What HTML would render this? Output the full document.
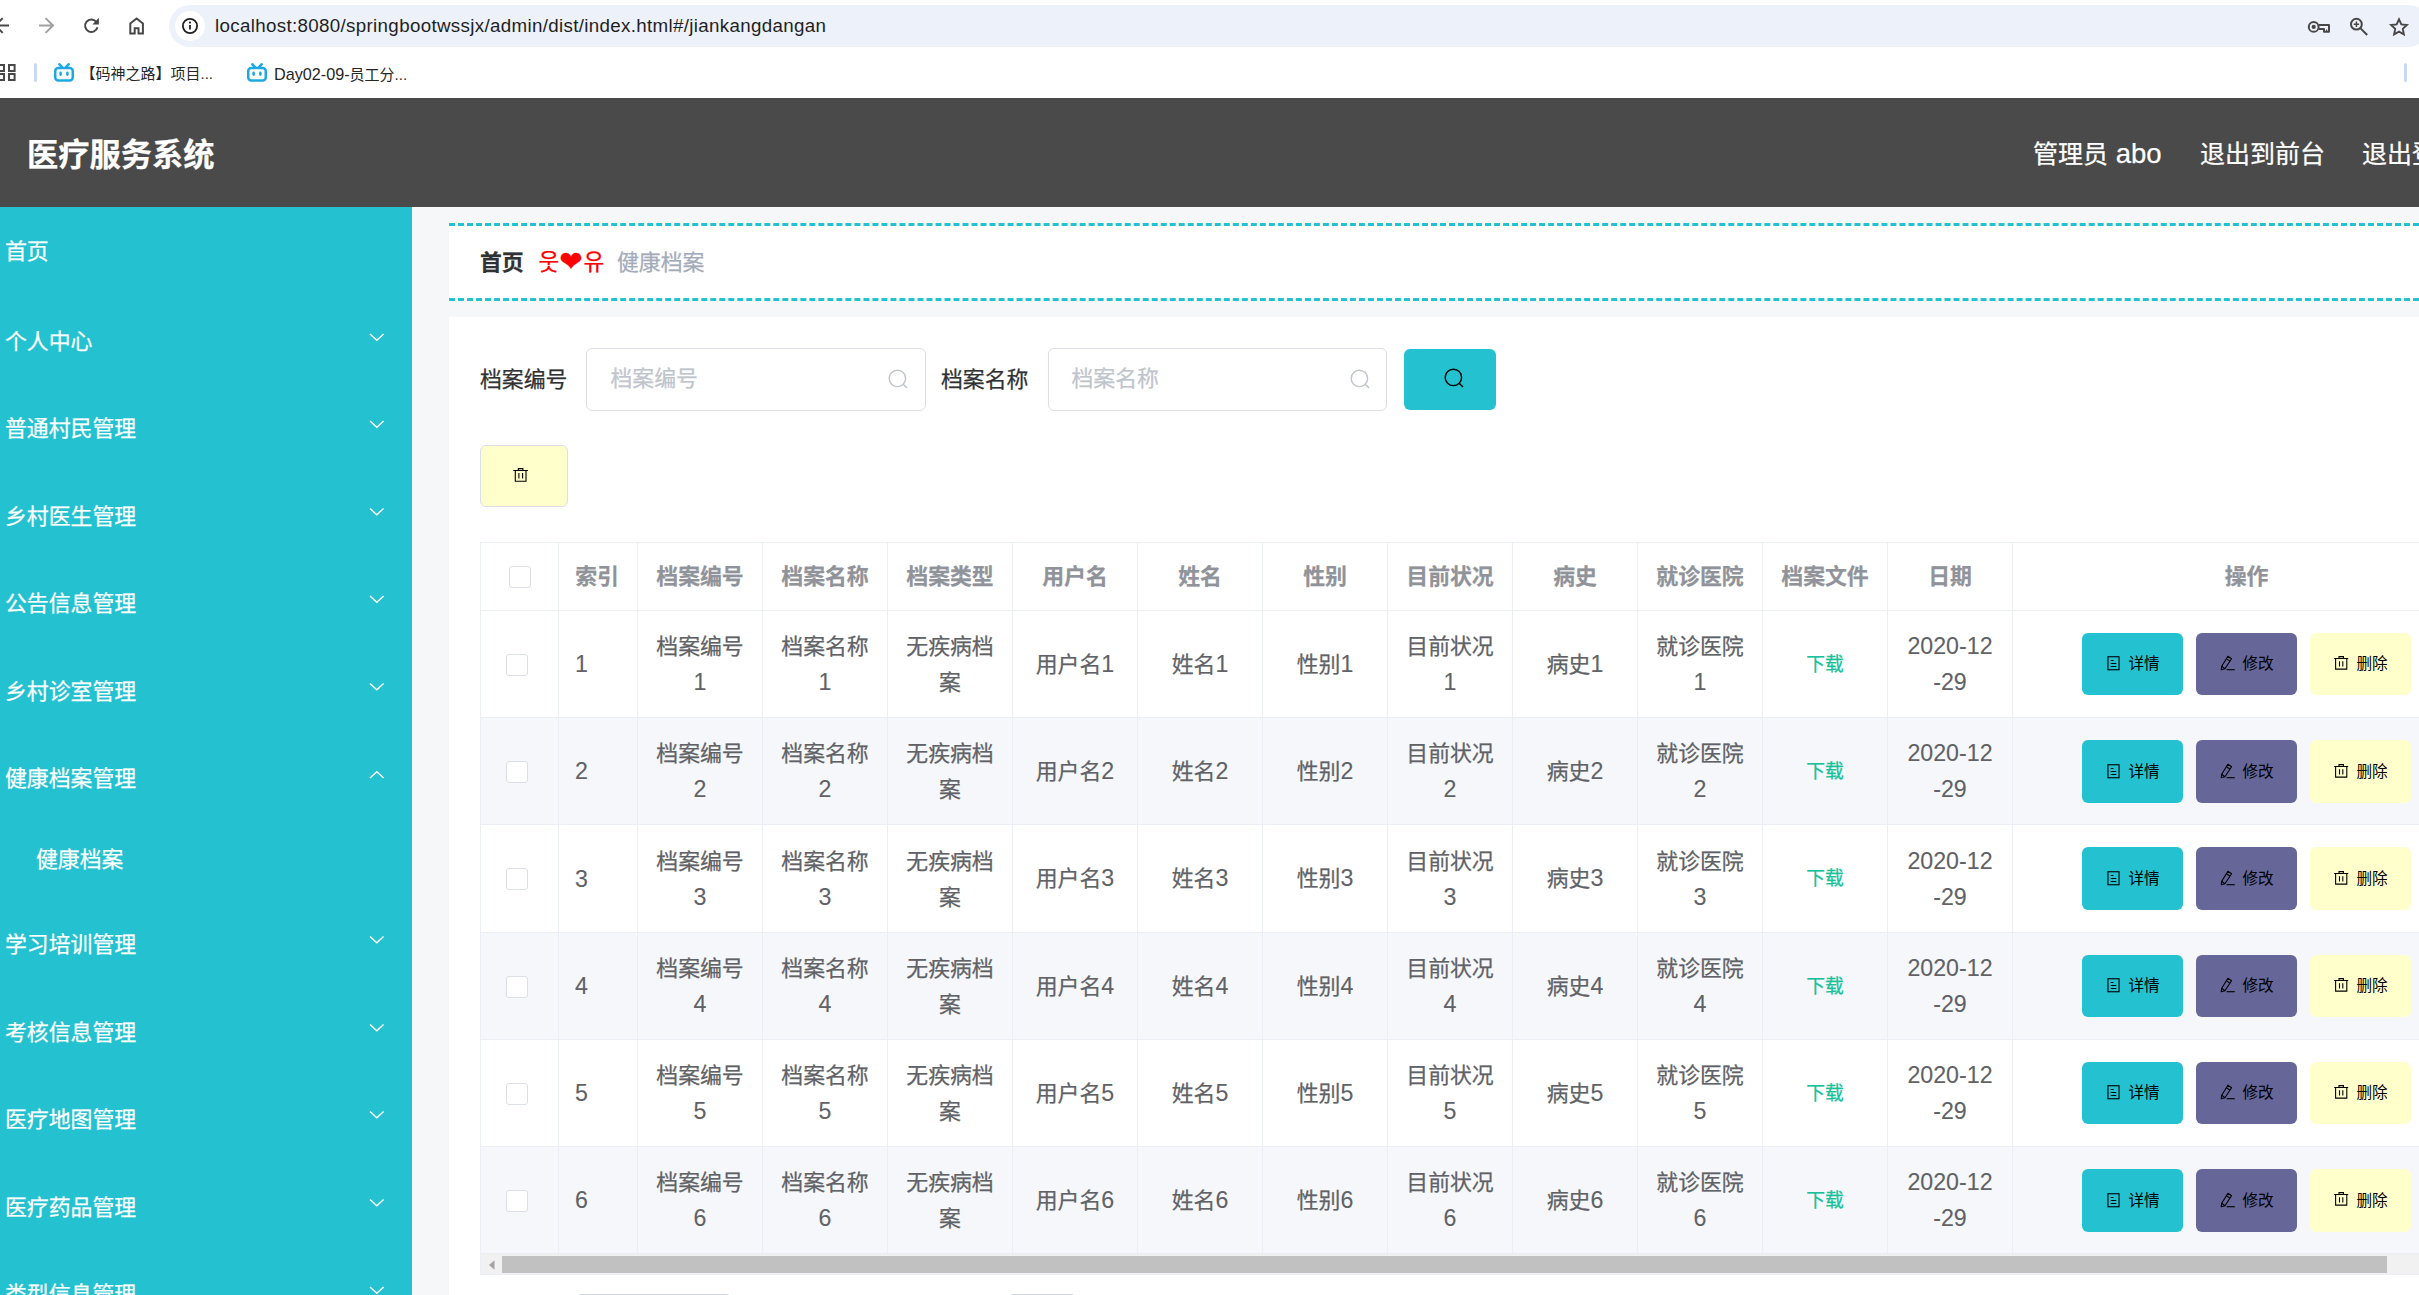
<!DOCTYPE html>
<html lang="zh-CN">
<head>
<meta charset="utf-8">
<title>医疗服务系统</title>
<style>
*{box-sizing:border-box;margin:0;padding:0}
html,body{width:2419px;height:1295px;overflow:hidden;background:#fff}
body{position:relative;font-family:"Liberation Sans","Noto Sans CJK SC",sans-serif;color:#606266;-webkit-text-stroke-width:0.25px}
#browser,.bt{-webkit-text-stroke-width:0}
.a{position:absolute;white-space:nowrap}
.t{position:absolute;white-space:nowrap;line-height:36px;height:36px}
svg{position:absolute;overflow:visible}
/* browser chrome */
#chrome{left:0;top:0;width:2419px;height:98px;background:#fff}
#pill{left:169px;top:5px;width:2260px;height:42px;border-radius:21px;background:#edf1fa}
#infobg{left:175px;top:11px;width:30px;height:30px;border-radius:15px;background:#fff}
#url{left:215px;top:7.5px;height:36px;line-height:36px;font-size:18.75px;color:#1f1f1f;letter-spacing:0.33px}
.bm{font-size:15px;color:#262626;line-height:24px;height:24px;top:62px}
/* app */
#header{left:0;top:98px;width:2419px;height:109px;background:#4a4a4a}
#side{left:0;top:207px;width:412px;height:1088px;background:#24c2d0}
#main{left:412px;top:207px;width:2007px;height:1088px;background:#f6f7f9}
.mi{left:5px;font-size:21.875px;color:#fff}
#crumb{left:449px;top:223px;width:1970px;height:78px;background:#fff;border-top:3px dashed #24c2d0;border-bottom:3px dashed #24c2d0}
#panel{left:449px;top:317px;width:1970px;height:978px;background:#fff}
.inp{top:348px;height:63px;border:1px solid #dcdfe6;border-radius:6px;background:#fff}
.btn{border-radius:6px}
button{border:0;padding:0;font:inherit;color:inherit;background:none;text-align:left;display:block}
ul,li{list-style:none}
/* table */
.hl{left:480px;width:1939px;height:1px;background:#ebeef5}
.vl{top:542px;width:1px;height:712px;background:#ebeef5}
.row{left:481px;width:1938px}
.th{font-size:21.875px;font-weight:bold;color:#909399;text-align:center}
.td{font-size:21.875px;color:#606266;text-align:center;line-height:35.5px}
.ck{width:22px;height:22px;border:1px solid #dcdfe6;border-radius:3px;background:#fff}
.dl{color:#17c19a;font-size:18.75px;position:relative;top:-1px}
.n{font-size:23.2px;-webkit-text-stroke-width:0.1px}
.b{width:101px;height:62px;border-radius:6px;overflow:visible}
.bt{font-size:15.625px;color:#000;line-height:24px;height:24px}
</style>
</head>
<body>
<div id="browser">
<div class="a" id="chrome"></div>
<div class="a" id="pill"></div>
<div class="a" id="infobg"></div>
<svg width="160" height="52" viewBox="0 0 160 52" style="left:0;top:0" fill="none" stroke-width="2" stroke-linecap="butt" stroke-linejoin="miter">
<g stroke="#474747"><path d="M-4 25.5H9M2.7 18.1 -4.7 25.5 2.7 32.9"/>
<path d="M96.2 21.6A6.3 6.3 0 1 0 97.5 27.3"/><path d="M98.9 17.7V24.4H92.4Z" fill="#474747" stroke="none"/>
<path d="M130.3 33.5V23.5L136.6 18.5 142.9 23.5V33.5H138.5V28.2H134.7V33.5Z"/></g>
<g stroke="#a0a0a0"><path d="M39 25.5H53M45.6 18.1 53 25.5 45.6 32.9"/></g>
</svg>
<svg width="18" height="18" viewBox="0 0 18 18" style="left:181px;top:17px" fill="none"><circle cx="9" cy="9" r="7.1" stroke="#1f1f1f" stroke-width="1.8"/><path d="M9 8v4.6" stroke="#1f1f1f" stroke-width="1.8"/><circle cx="9" cy="5.6" r="1.05" fill="#1f1f1f"/></svg>
<div class="a" id="url">localhost:8080/springbootwssjx/admin/dist/index.html#/jiankangdangan</div>
<svg width="120" height="30" viewBox="0 0 120 30" style="left:2300px;top:12px" fill="none" stroke="#474747" stroke-width="2">
<circle cx="13.7" cy="14.9" r="4.9"/><circle cx="13.7" cy="14.9" r="2.1" fill="#474747" stroke="none"/><path d="M19 12.9H29V19.7H24V16.9H19" stroke-linejoin="round"/><path d="M26.6 17.4V19.7" stroke-width="1.2"/>
<circle cx="56.4" cy="12.2" r="5.4"/><path d="M60.3 16.1 67.2 23"/><path d="M53.7 12.2h5.4M56.4 9.5v5.4" stroke-width="1.5"/>
<path d="M99.00 7.30 L101.35 12.36 L106.89 13.04 L102.80 16.84 L103.88 22.31 L99.00 19.60 L94.12 22.31 L95.20 16.84 L91.11 13.04 L96.65 12.36Z" stroke-width="1.9" stroke-linejoin="miter"/>
</svg>
<svg width="20" height="20" viewBox="0 0 20 20" style="left:0;top:63px" fill="none" stroke="#474747" stroke-width="2">
<rect x="-2.2" y="2" width="6.2" height="6"/><rect x="9" y="2" width="5.6" height="6"/><rect x="-2.2" y="11" width="6.2" height="6"/><rect x="9" y="11" width="5.6" height="6"/></svg>
<div class="a" style="left:34px;top:63px;width:3px;height:19px;border-radius:1.5px;background:#c9d8f7"></div>
<div class="a" style="left:2404px;top:63px;width:3px;height:19px;border-radius:1.5px;background:#c9d8f7"></div>
<svg width="20" height="19" viewBox="0 0 20 19" style="left:54px;top:63px" fill="none" stroke="#1ea8e1" stroke-width="2.5" stroke-linecap="round"><rect x="1.25" y="4.9" width="17.5" height="12.6" rx="3"/><path d="M5.4 1.3 8 4.2M14.6 1.3 12 4.2"/><path d="M6.6 9.9v1.7M13.4 9.9v1.7" stroke-width="2.6"/></svg>
<svg width="20" height="19" viewBox="0 0 20 19" style="left:247px;top:63px" fill="none" stroke="#1ea8e1" stroke-width="2.5" stroke-linecap="round"><rect x="1.25" y="4.9" width="17.5" height="12.6" rx="3"/><path d="M5.4 1.3 8 4.2M14.6 1.3 12 4.2"/><path d="M6.6 9.9v1.7M13.4 9.9v1.7" stroke-width="2.6"/></svg>
<div class="a bm" style="left:80.5px">【码神之路】项目...</div>
<div class="a bm" style="left:274px"><span style="font-size:16.2px">Day02-09-</span>员工分...</div>
</div>
<header>
<div class="a" id="header"></div>
<h1 class="t " style="left:27px;top:133.8px;line-height:44px;height:44px;font-size:31.25px;font-weight:bold;color:#fff;">医疗服务系统</h1>
<div class="t " style="left:2033px;top:133.9px;line-height:40px;height:40px;font-size:25px;color:#fff;">管理员<span style="font-size:27.5px"> abo</span></div>
<div class="t " style="left:2200px;top:133.9px;line-height:40px;height:40px;font-size:25px;color:#fff;">退出到前台</div>
<div class="t " style="left:2362px;top:133.9px;line-height:40px;height:40px;font-size:25px;color:#fff;">退出登录</div>
</header>
<div class="a" id="main"></div>
<nav>
<div class="a" id="side"></div>
<ul>
<li class="t mi" style="left:5px;top:234.3px">首页</li>
<li class="t mi" style="left:5px;top:324px">个人中心<svg width="412" height="1295" viewBox="0 0 412 1295" style="left:-5px;top:-324px" fill="none" stroke="#fff" stroke-width="1.4"><path d="M370 333.9 L376.8 340.2 L383.6 333.9"/></svg></li>
<li class="t mi" style="left:5px;top:411.1px">普通村民管理<svg width="412" height="1295" viewBox="0 0 412 1295" style="left:-5px;top:-411.1px" fill="none" stroke="#fff" stroke-width="1.4"><path d="M370 421 L376.8 427.3 L383.6 421"/></svg></li>
<li class="t mi" style="left:5px;top:498.6px">乡村医生管理<svg width="412" height="1295" viewBox="0 0 412 1295" style="left:-5px;top:-498.6px" fill="none" stroke="#fff" stroke-width="1.4"><path d="M370 508.5 L376.8 514.8 L383.6 508.5"/></svg></li>
<li class="t mi" style="left:5px;top:586.1px">公告信息管理<svg width="412" height="1295" viewBox="0 0 412 1295" style="left:-5px;top:-586.1px" fill="none" stroke="#fff" stroke-width="1.4"><path d="M370 596 L376.8 602.3 L383.6 596"/></svg></li>
<li class="t mi" style="left:5px;top:673.6px">乡村诊室管理<svg width="412" height="1295" viewBox="0 0 412 1295" style="left:-5px;top:-673.6px" fill="none" stroke="#fff" stroke-width="1.4"><path d="M370 683.5 L376.8 689.8 L383.6 683.5"/></svg></li>
<li class="t mi" style="left:5px;top:760.8px">健康档案管理<svg width="412" height="1295" viewBox="0 0 412 1295" style="left:-5px;top:-760.8px" fill="none" stroke="#fff" stroke-width="1.4"><path d="M370 778 L376.8 771.7 L383.6 778"/></svg></li>
<li class="t mi" style="left:36px;top:842px">健康档案</li>
<li class="t mi" style="left:5px;top:926.6px">学习培训管理<svg width="412" height="1295" viewBox="0 0 412 1295" style="left:-5px;top:-926.6px" fill="none" stroke="#fff" stroke-width="1.4"><path d="M370 936.5 L376.8 942.8 L383.6 936.5"/></svg></li>
<li class="t mi" style="left:5px;top:1014.6px">考核信息管理<svg width="412" height="1295" viewBox="0 0 412 1295" style="left:-5px;top:-1014.6px" fill="none" stroke="#fff" stroke-width="1.4"><path d="M370 1024.5 L376.8 1030.8 L383.6 1024.5"/></svg></li>
<li class="t mi" style="left:5px;top:1101.6px">医疗地图管理<svg width="412" height="1295" viewBox="0 0 412 1295" style="left:-5px;top:-1101.6px" fill="none" stroke="#fff" stroke-width="1.4"><path d="M370 1111.5 L376.8 1117.8 L383.6 1111.5"/></svg></li>
<li class="t mi" style="left:5px;top:1189.6px">医疗药品管理<svg width="412" height="1295" viewBox="0 0 412 1295" style="left:-5px;top:-1189.6px" fill="none" stroke="#fff" stroke-width="1.4"><path d="M370 1199.5 L376.8 1205.8 L383.6 1199.5"/></svg></li>
<li class="t mi" style="left:5px;top:1277.1px">类型信息管理<svg width="412" height="1295" viewBox="0 0 412 1295" style="left:-5px;top:-1277.1px" fill="none" stroke="#fff" stroke-width="1.4"><path d="M370 1287 L376.8 1293.3 L383.6 1287"/></svg></li>
</ul>
</nav>
<main>
<div class="a" id="crumb"></div>
<div class="t " style="left:480px;top:244.6px;font-size:21.875px;font-weight:bold;color:#303133;">首页</div>
<div class="t " style="left:538.5px;top:244.6px;font-size:22.5px;color:#ff0000;font-family:'Liberation Sans','Noto Sans CJK KR',sans-serif;">웃</div>
<div class="t " style="left:559.3px;top:243.6px;font-size:28px;color:#ff0000;font-family:'Liberation Sans','Noto Sans CJK KR','DejaVu Sans',sans-serif;">❤</div>
<div class="t " style="left:583.6px;top:244.6px;font-size:22.5px;color:#ff0000;font-family:'Liberation Sans','Noto Sans CJK KR',sans-serif;">유</div>
<div class="t " style="left:617px;top:244.6px;font-size:21.875px;color:#a3abbb;">健康档案</div>
<div class="a" id="panel"></div>
<label class="t " style="left:480px;top:361.5px;font-size:21.875px;color:#303133;">档案编号</label>
<div class="a inp" style="left:586px;width:340px"><span class="t" style="left:23.5px;top:12px;font-size:21.875px;color:#c0c4cc">档案编号</span><svg width="22" height="22" viewBox="0 0 22 22" style="left:300px;top:19px" fill="none" stroke="#c0c4cc" stroke-width="1.4"><circle cx="10.4" cy="10.4" r="8.2"/><path d="M16.2 16.2 20 20"/></svg></div>
<label class="t " style="left:941px;top:361.5px;font-size:21.875px;color:#303133;">档案名称</label>
<div class="a inp" style="left:1048px;width:339px"><span class="t" style="left:22.5px;top:12px;font-size:21.875px;color:#c0c4cc">档案名称</span><svg width="22" height="22" viewBox="0 0 22 22" style="left:300px;top:19px" fill="none" stroke="#c0c4cc" stroke-width="1.4"><circle cx="10.4" cy="10.4" r="8.2"/><path d="M16.2 16.2 20 20"/></svg></div>
<button class="a btn" style="left:1404px;top:349px;width:92px;height:61px;background:#24c2d0"><svg width="22" height="22" viewBox="0 0 22 22" style="left:39px;top:18px" fill="none" stroke="#000" stroke-width="1.4"><circle cx="10.4" cy="10.4" r="8.2"/><path d="M16.2 16.2 20 20"/></svg></button>
<button class="a btn" style="left:480px;top:445px;width:88px;height:62px;background:#ffffcc;border:1px solid #dcdfe6"><svg width="16" height="16" viewBox="0 0 16 16" style="left:32px;top:22px" fill="none" stroke="#000" stroke-width="1.1"><path d="M0.3 2.5h14.6M5.3 2.5V0.6h4.6V2.5M2.3 2.5V13.2h10.7V2.5M5.9 5v5.6M9.6 5v5.6"/></svg></button>
<div role="table">
<div class="a row" style="top:718px;height:106px;background:#f5f7fa"></div>
<div class="a row" style="top:933px;height:106px;background:#f5f7fa"></div>
<div class="a row" style="top:1147px;height:106px;background:#f5f7fa"></div>
<div class="a hl" style="top:542px"></div>
<div class="a hl" style="top:610px"></div>
<div class="a hl" style="top:717px"></div>
<div class="a hl" style="top:824px"></div>
<div class="a hl" style="top:932px"></div>
<div class="a hl" style="top:1039px"></div>
<div class="a hl" style="top:1146px"></div>
<div class="a hl" style="top:1253px"></div>
<div class="a vl" style="left:480px"></div>
<div class="a vl" style="left:558px"></div>
<div class="a vl" style="left:637px"></div>
<div class="a vl" style="left:762px"></div>
<div class="a vl" style="left:887px"></div>
<div class="a vl" style="left:1012px"></div>
<div class="a vl" style="left:1137px"></div>
<div class="a vl" style="left:1262px"></div>
<div class="a vl" style="left:1387px"></div>
<div class="a vl" style="left:1512px"></div>
<div class="a vl" style="left:1637px"></div>
<div class="a vl" style="left:1762px"></div>
<div class="a vl" style="left:1887px"></div>
<div class="a vl" style="left:2012px"></div>
<div role="row">
<div class="a ck" style="left:509px;top:566px"></div>
<div class="t th" style="left:558px;top:558.6px;width:78px;">索引</div>
<div class="t th" style="left:638px;top:558.6px;width:124px;">档案编号</div>
<div class="t th" style="left:763px;top:558.6px;width:124px;">档案名称</div>
<div class="t th" style="left:888px;top:558.6px;width:124px;">档案类型</div>
<div class="t th" style="left:1013px;top:558.6px;width:124px;">用户名</div>
<div class="t th" style="left:1138px;top:558.6px;width:124px;">姓名</div>
<div class="t th" style="left:1263px;top:558.6px;width:124px;">性别</div>
<div class="t th" style="left:1388px;top:558.6px;width:124px;">目前状况</div>
<div class="t th" style="left:1513px;top:558.6px;width:124px;">病史</div>
<div class="t th" style="left:1638px;top:558.6px;width:124px;">就诊医院</div>
<div class="t th" style="left:1763px;top:558.6px;width:124px;">档案文件</div>
<div class="t th" style="left:1888px;top:558.6px;width:124px;">日期</div>
<div class="t th" style="left:2012.5px;top:558.6px;width:468px;">操作</div>
</div>
<div role="row">
<div class="a ck" style="left:506px;top:654px"></div>
<div class="a td" style="left:575px;top:646.95px;text-align:left"><span class="n">1</span></div>
<div class="a td" style="left:638px;top:629.2px;width:124px;">档案编号<br><span class="n">1</span></div>
<div class="a td" style="left:763px;top:629.2px;width:124px;">档案名称<br><span class="n">1</span></div>
<div class="a td" style="left:888px;top:629.2px;width:124px;">无疾病档<br>案</div>
<div class="a td" style="left:1013px;top:646.95px;width:124px;">用户名<span class="n">1</span></div>
<div class="a td" style="left:1138px;top:646.95px;width:124px;">姓名<span class="n">1</span></div>
<div class="a td" style="left:1263px;top:646.95px;width:124px;">性别<span class="n">1</span></div>
<div class="a td" style="left:1388px;top:629.2px;width:124px;">目前状况<br><span class="n">1</span></div>
<div class="a td" style="left:1513px;top:646.95px;width:124px;">病史<span class="n">1</span></div>
<div class="a td" style="left:1638px;top:629.2px;width:124px;">就诊医院<br><span class="n">1</span></div>
<div class="a td" style="left:1763px;top:646.95px;width:124px;"><span class="dl">下载</span></div>
<div class="a td" style="left:1888px;top:629.2px;width:124px;"><span class="n">2020-12</span><br><span class="n">-29</span></div>
<button class="a b" style="left:2082px;top:633px;height:62px;background:#24c2d0"><svg width="14" height="16" viewBox="0 0 14 16" style="left:24.5px;top:23px" fill="none" stroke="#000" stroke-width="1.1"><rect x="0.95" y="0.75" width="11.1" height="13"/><path d="M3.7 4.5h2.8M3.7 7.5h5.6M3.7 10.5h5.6"/></svg><span class="a bt" style="left:46.5px;top:19px">详情</span></button>
<button class="a b" style="left:2196px;top:633px;height:62px;background:#666699"><svg width="16" height="16" viewBox="0 0 16 16" style="left:23.5px;top:22px" fill="none" stroke="#000" stroke-width="1.1" stroke-linejoin="round"><path d="M7.9 1.3 11.6 3.7 4.9 13.7 1.2 14.8 1.7 11.2Z"/><path d="M6.4 3.7 10 6.1M1.7 11.2 4.9 13.7"/><path d="M6.6 14.7h8.2"/></svg><span class="a bt" style="left:46.5px;top:19px">修改</span></button>
<button class="a b" style="left:2310px;top:633px;height:62px;background:#ffffcc"><svg width="16" height="16" viewBox="0 0 16 16" style="left:24px;top:22.7px" fill="none" stroke="#000" stroke-width="1.1"><path d="M0.2 2.5h14M5 2.5V0.6h4.4V2.5M1.6 2.5V13.1h11.2V2.5M5.5 5.2v5.4M8.8 5.2v5.4"/></svg><span class="a bt" style="left:46.5px;top:19px">删除</span></button>
</div>
<div role="row">
<div class="a ck" style="left:506px;top:761px"></div>
<div class="a td" style="left:575px;top:753.95px;text-align:left"><span class="n">2</span></div>
<div class="a td" style="left:638px;top:736.2px;width:124px;">档案编号<br><span class="n">2</span></div>
<div class="a td" style="left:763px;top:736.2px;width:124px;">档案名称<br><span class="n">2</span></div>
<div class="a td" style="left:888px;top:736.2px;width:124px;">无疾病档<br>案</div>
<div class="a td" style="left:1013px;top:753.95px;width:124px;">用户名<span class="n">2</span></div>
<div class="a td" style="left:1138px;top:753.95px;width:124px;">姓名<span class="n">2</span></div>
<div class="a td" style="left:1263px;top:753.95px;width:124px;">性别<span class="n">2</span></div>
<div class="a td" style="left:1388px;top:736.2px;width:124px;">目前状况<br><span class="n">2</span></div>
<div class="a td" style="left:1513px;top:753.95px;width:124px;">病史<span class="n">2</span></div>
<div class="a td" style="left:1638px;top:736.2px;width:124px;">就诊医院<br><span class="n">2</span></div>
<div class="a td" style="left:1763px;top:753.95px;width:124px;"><span class="dl">下载</span></div>
<div class="a td" style="left:1888px;top:736.2px;width:124px;"><span class="n">2020-12</span><br><span class="n">-29</span></div>
<button class="a b" style="left:2082px;top:740px;height:63px;background:#24c2d0"><svg width="14" height="16" viewBox="0 0 14 16" style="left:24.5px;top:24px" fill="none" stroke="#000" stroke-width="1.1"><rect x="0.95" y="0.75" width="11.1" height="13"/><path d="M3.7 4.5h2.8M3.7 7.5h5.6M3.7 10.5h5.6"/></svg><span class="a bt" style="left:46.5px;top:20px">详情</span></button>
<button class="a b" style="left:2196px;top:740px;height:63px;background:#666699"><svg width="16" height="16" viewBox="0 0 16 16" style="left:23.5px;top:23px" fill="none" stroke="#000" stroke-width="1.1" stroke-linejoin="round"><path d="M7.9 1.3 11.6 3.7 4.9 13.7 1.2 14.8 1.7 11.2Z"/><path d="M6.4 3.7 10 6.1M1.7 11.2 4.9 13.7"/><path d="M6.6 14.7h8.2"/></svg><span class="a bt" style="left:46.5px;top:20px">修改</span></button>
<button class="a b" style="left:2310px;top:740px;height:63px;background:#ffffcc"><svg width="16" height="16" viewBox="0 0 16 16" style="left:24px;top:23.7px" fill="none" stroke="#000" stroke-width="1.1"><path d="M0.2 2.5h14M5 2.5V0.6h4.4V2.5M1.6 2.5V13.1h11.2V2.5M5.5 5.2v5.4M8.8 5.2v5.4"/></svg><span class="a bt" style="left:46.5px;top:20px">删除</span></button>
</div>
<div role="row">
<div class="a ck" style="left:506px;top:868px"></div>
<div class="a td" style="left:575px;top:862.45px;text-align:left"><span class="n">3</span></div>
<div class="a td" style="left:638px;top:843.7px;width:124px;">档案编号<br><span style="position:relative;top:1px"><span class="n">3</span></span></div>
<div class="a td" style="left:763px;top:843.7px;width:124px;">档案名称<br><span style="position:relative;top:1px"><span class="n">3</span></span></div>
<div class="a td" style="left:888px;top:843.7px;width:124px;">无疾病档<br><span style="position:relative;top:1px">案</span></div>
<div class="a td" style="left:1013px;top:861.45px;width:124px;">用户名<span class="n">3</span></div>
<div class="a td" style="left:1138px;top:861.45px;width:124px;">姓名<span class="n">3</span></div>
<div class="a td" style="left:1263px;top:861.45px;width:124px;">性别<span class="n">3</span></div>
<div class="a td" style="left:1388px;top:843.7px;width:124px;">目前状况<br><span style="position:relative;top:1px"><span class="n">3</span></span></div>
<div class="a td" style="left:1513px;top:861.45px;width:124px;">病史<span class="n">3</span></div>
<div class="a td" style="left:1638px;top:843.7px;width:124px;">就诊医院<br><span style="position:relative;top:1px"><span class="n">3</span></span></div>
<div class="a td" style="left:1763px;top:861.45px;width:124px;"><span class="dl">下载</span></div>
<div class="a td" style="left:1888px;top:843.7px;width:124px;"><span class="n">2020-12</span><br><span style="position:relative;top:1px"><span class="n">-29</span></span></div>
<button class="a b" style="left:2082px;top:847px;height:63px;background:#24c2d0"><svg width="14" height="16" viewBox="0 0 14 16" style="left:24.5px;top:24px" fill="none" stroke="#000" stroke-width="1.1"><rect x="0.95" y="0.75" width="11.1" height="13"/><path d="M3.7 4.5h2.8M3.7 7.5h5.6M3.7 10.5h5.6"/></svg><span class="a bt" style="left:46.5px;top:20px">详情</span></button>
<button class="a b" style="left:2196px;top:847px;height:63px;background:#666699"><svg width="16" height="16" viewBox="0 0 16 16" style="left:23.5px;top:23px" fill="none" stroke="#000" stroke-width="1.1" stroke-linejoin="round"><path d="M7.9 1.3 11.6 3.7 4.9 13.7 1.2 14.8 1.7 11.2Z"/><path d="M6.4 3.7 10 6.1M1.7 11.2 4.9 13.7"/><path d="M6.6 14.7h8.2"/></svg><span class="a bt" style="left:46.5px;top:20px">修改</span></button>
<button class="a b" style="left:2310px;top:847px;height:63px;background:#ffffcc"><svg width="16" height="16" viewBox="0 0 16 16" style="left:24px;top:23.7px" fill="none" stroke="#000" stroke-width="1.1"><path d="M0.2 2.5h14M5 2.5V0.6h4.4V2.5M1.6 2.5V13.1h11.2V2.5M5.5 5.2v5.4M8.8 5.2v5.4"/></svg><span class="a bt" style="left:46.5px;top:20px">删除</span></button>
</div>
<div role="row">
<div class="a ck" style="left:506px;top:976px"></div>
<div class="a td" style="left:575px;top:968.95px;text-align:left"><span class="n">4</span></div>
<div class="a td" style="left:638px;top:951.2px;width:124px;">档案编号<br><span class="n">4</span></div>
<div class="a td" style="left:763px;top:951.2px;width:124px;">档案名称<br><span class="n">4</span></div>
<div class="a td" style="left:888px;top:951.2px;width:124px;">无疾病档<br>案</div>
<div class="a td" style="left:1013px;top:968.95px;width:124px;">用户名<span class="n">4</span></div>
<div class="a td" style="left:1138px;top:968.95px;width:124px;">姓名<span class="n">4</span></div>
<div class="a td" style="left:1263px;top:968.95px;width:124px;">性别<span class="n">4</span></div>
<div class="a td" style="left:1388px;top:951.2px;width:124px;">目前状况<br><span class="n">4</span></div>
<div class="a td" style="left:1513px;top:968.95px;width:124px;">病史<span class="n">4</span></div>
<div class="a td" style="left:1638px;top:951.2px;width:124px;">就诊医院<br><span class="n">4</span></div>
<div class="a td" style="left:1763px;top:968.95px;width:124px;"><span class="dl">下载</span></div>
<div class="a td" style="left:1888px;top:951.2px;width:124px;"><span class="n">2020-12</span><br><span class="n">-29</span></div>
<button class="a b" style="left:2082px;top:955px;height:62px;background:#24c2d0"><svg width="14" height="16" viewBox="0 0 14 16" style="left:24.5px;top:23px" fill="none" stroke="#000" stroke-width="1.1"><rect x="0.95" y="0.75" width="11.1" height="13"/><path d="M3.7 4.5h2.8M3.7 7.5h5.6M3.7 10.5h5.6"/></svg><span class="a bt" style="left:46.5px;top:19px">详情</span></button>
<button class="a b" style="left:2196px;top:955px;height:62px;background:#666699"><svg width="16" height="16" viewBox="0 0 16 16" style="left:23.5px;top:22px" fill="none" stroke="#000" stroke-width="1.1" stroke-linejoin="round"><path d="M7.9 1.3 11.6 3.7 4.9 13.7 1.2 14.8 1.7 11.2Z"/><path d="M6.4 3.7 10 6.1M1.7 11.2 4.9 13.7"/><path d="M6.6 14.7h8.2"/></svg><span class="a bt" style="left:46.5px;top:19px">修改</span></button>
<button class="a b" style="left:2310px;top:955px;height:62px;background:#ffffcc"><svg width="16" height="16" viewBox="0 0 16 16" style="left:24px;top:22.7px" fill="none" stroke="#000" stroke-width="1.1"><path d="M0.2 2.5h14M5 2.5V0.6h4.4V2.5M1.6 2.5V13.1h11.2V2.5M5.5 5.2v5.4M8.8 5.2v5.4"/></svg><span class="a bt" style="left:46.5px;top:19px">删除</span></button>
</div>
<div role="row">
<div class="a ck" style="left:506px;top:1083px"></div>
<div class="a td" style="left:575px;top:1075.95px;text-align:left"><span class="n">5</span></div>
<div class="a td" style="left:638px;top:1058.2px;width:124px;">档案编号<br><span class="n">5</span></div>
<div class="a td" style="left:763px;top:1058.2px;width:124px;">档案名称<br><span class="n">5</span></div>
<div class="a td" style="left:888px;top:1058.2px;width:124px;">无疾病档<br>案</div>
<div class="a td" style="left:1013px;top:1075.95px;width:124px;">用户名<span class="n">5</span></div>
<div class="a td" style="left:1138px;top:1075.95px;width:124px;">姓名<span class="n">5</span></div>
<div class="a td" style="left:1263px;top:1075.95px;width:124px;">性别<span class="n">5</span></div>
<div class="a td" style="left:1388px;top:1058.2px;width:124px;">目前状况<br><span class="n">5</span></div>
<div class="a td" style="left:1513px;top:1075.95px;width:124px;">病史<span class="n">5</span></div>
<div class="a td" style="left:1638px;top:1058.2px;width:124px;">就诊医院<br><span class="n">5</span></div>
<div class="a td" style="left:1763px;top:1075.95px;width:124px;"><span class="dl">下载</span></div>
<div class="a td" style="left:1888px;top:1058.2px;width:124px;"><span class="n">2020-12</span><br><span class="n">-29</span></div>
<button class="a b" style="left:2082px;top:1062px;height:62px;background:#24c2d0"><svg width="14" height="16" viewBox="0 0 14 16" style="left:24.5px;top:23px" fill="none" stroke="#000" stroke-width="1.1"><rect x="0.95" y="0.75" width="11.1" height="13"/><path d="M3.7 4.5h2.8M3.7 7.5h5.6M3.7 10.5h5.6"/></svg><span class="a bt" style="left:46.5px;top:19px">详情</span></button>
<button class="a b" style="left:2196px;top:1062px;height:62px;background:#666699"><svg width="16" height="16" viewBox="0 0 16 16" style="left:23.5px;top:22px" fill="none" stroke="#000" stroke-width="1.1" stroke-linejoin="round"><path d="M7.9 1.3 11.6 3.7 4.9 13.7 1.2 14.8 1.7 11.2Z"/><path d="M6.4 3.7 10 6.1M1.7 11.2 4.9 13.7"/><path d="M6.6 14.7h8.2"/></svg><span class="a bt" style="left:46.5px;top:19px">修改</span></button>
<button class="a b" style="left:2310px;top:1062px;height:62px;background:#ffffcc"><svg width="16" height="16" viewBox="0 0 16 16" style="left:24px;top:22.7px" fill="none" stroke="#000" stroke-width="1.1"><path d="M0.2 2.5h14M5 2.5V0.6h4.4V2.5M1.6 2.5V13.1h11.2V2.5M5.5 5.2v5.4M8.8 5.2v5.4"/></svg><span class="a bt" style="left:46.5px;top:19px">删除</span></button>
</div>
<div role="row">
<div class="a ck" style="left:506px;top:1190px"></div>
<div class="a td" style="left:575px;top:1182.95px;text-align:left"><span class="n">6</span></div>
<div class="a td" style="left:638px;top:1165.2px;width:124px;">档案编号<br><span class="n">6</span></div>
<div class="a td" style="left:763px;top:1165.2px;width:124px;">档案名称<br><span class="n">6</span></div>
<div class="a td" style="left:888px;top:1165.2px;width:124px;">无疾病档<br>案</div>
<div class="a td" style="left:1013px;top:1182.95px;width:124px;">用户名<span class="n">6</span></div>
<div class="a td" style="left:1138px;top:1182.95px;width:124px;">姓名<span class="n">6</span></div>
<div class="a td" style="left:1263px;top:1182.95px;width:124px;">性别<span class="n">6</span></div>
<div class="a td" style="left:1388px;top:1165.2px;width:124px;">目前状况<br><span class="n">6</span></div>
<div class="a td" style="left:1513px;top:1182.95px;width:124px;">病史<span class="n">6</span></div>
<div class="a td" style="left:1638px;top:1165.2px;width:124px;">就诊医院<br><span class="n">6</span></div>
<div class="a td" style="left:1763px;top:1182.95px;width:124px;"><span class="dl">下载</span></div>
<div class="a td" style="left:1888px;top:1165.2px;width:124px;"><span class="n">2020-12</span><br><span class="n">-29</span></div>
<button class="a b" style="left:2082px;top:1169px;height:63px;background:#24c2d0"><svg width="14" height="16" viewBox="0 0 14 16" style="left:24.5px;top:23.5px" fill="none" stroke="#000" stroke-width="1.1"><rect x="0.95" y="0.75" width="11.1" height="13"/><path d="M3.7 4.5h2.8M3.7 7.5h5.6M3.7 10.5h5.6"/></svg><span class="a bt" style="left:46.5px;top:19.5px">详情</span></button>
<button class="a b" style="left:2196px;top:1169px;height:63px;background:#666699"><svg width="16" height="16" viewBox="0 0 16 16" style="left:23.5px;top:22.5px" fill="none" stroke="#000" stroke-width="1.1" stroke-linejoin="round"><path d="M7.9 1.3 11.6 3.7 4.9 13.7 1.2 14.8 1.7 11.2Z"/><path d="M6.4 3.7 10 6.1M1.7 11.2 4.9 13.7"/><path d="M6.6 14.7h8.2"/></svg><span class="a bt" style="left:46.5px;top:19.5px">修改</span></button>
<button class="a b" style="left:2310px;top:1169px;height:63px;background:#ffffcc"><svg width="16" height="16" viewBox="0 0 16 16" style="left:24px;top:23.2px" fill="none" stroke="#000" stroke-width="1.1"><path d="M0.2 2.5h14M5 2.5V0.6h4.4V2.5M1.6 2.5V13.1h11.2V2.5M5.5 5.2v5.4M8.8 5.2v5.4"/></svg><span class="a bt" style="left:46.5px;top:19.5px">删除</span></button>
</div>
</div>
<div class="a" style="left:480px;top:1254px;width:1939px;height:21px;background:#f1f1f1;border-bottom:1px solid #ebeef5;border-left:1px solid #ebeef5"></div>
<div class="a" style="left:502px;top:1256px;width:1885px;height:17px;background:#c1c1c1"></div>
<svg width="10" height="12" viewBox="0 0 10 12" style="left:487.6px;top:1258.6px"><path d="M6.5 1.2V10.8L1 6Z" fill="#a3a3a3"/></svg>
<div class="a" style="left:578px;top:1294px;width:152px;height:30px;border:1px solid #d3d6de;border-radius:3px;background:#fff"></div>
<div class="a" style="left:1010px;top:1294px;width:65px;height:30px;border:1px solid #d3d6de;border-radius:3px;background:#fff"></div>
</main>
</body>
</html>
